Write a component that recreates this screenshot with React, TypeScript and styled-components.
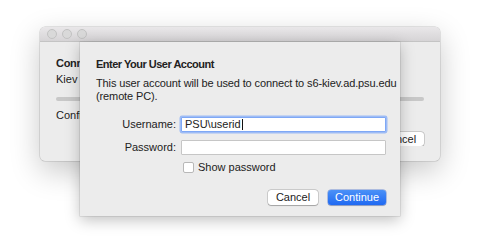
import React from "react";
import styled, { createGlobalStyle } from "styled-components";

const Global = createGlobalStyle`
  html, body { margin: 0; padding: 0; background: #ffffff; }
  body { font-family: "Liberation Sans", Arial, sans-serif; -webkit-font-smoothing: antialiased; }
`;

const Page = styled.div`
  width: 480px;
  height: 236px;
  padding: 27px 0 0 40px;
  box-sizing: border-box;
  position: relative;
  overflow: hidden;
`;

const Window = styled.div`
  width: 400px;
  height: 134px;
  background: #ececec;
  border-radius: 5px;
  box-shadow: 0 10px 30px rgba(0, 0, 0, 0.22), 0 0 0 0.5px rgba(0, 0, 0, 0.18);
  display: flex;
  flex-direction: column;
  position: relative;
`;

const TitleBar = styled.div`
  height: 14px;
  background: linear-gradient(#e9e7e9, #d6d4d6);
  border-bottom: 1px solid #c4c4c4;
  border-radius: 5px 5px 0 0;
  display: flex;
  align-items: center;
  gap: 5px;
  padding-left: 7px;
`;

const Light = styled.span`
  width: 8px;
  height: 8px;
  border-radius: 50%;
  background: #d9d9d9;
  border: 0.5px solid #c2c2c2;
`;

const WinBody = styled.div`
  display: flex;
  font-size: 11px;
  color: #222;
`;

const LeftCol = styled.div`
  width: 40px;
  padding: 15px 0 0 16px;
  box-sizing: border-box;
  overflow: hidden;
  white-space: nowrap;
  display: flex;
  flex-direction: column;
`;

const Hidden = styled.div`
  width: 320px;
`;

const RightCol = styled.div`
  width: 40px;
  padding-right: 16px;
  padding-top: 55px;
  box-sizing: border-box;
  overflow: hidden;
  display: flex;
  flex-direction: column;
`;

const Bold = styled.div`
  font-weight: 700;
  line-height: 13px;
  letter-spacing: -0.3px;
`;

const Line = styled.div`
  line-height: 13px;
  margin-top: 3px;
`;

const Track = styled.div<{ $right?: boolean }>`
  height: 4px;
  background: #c8c8c8;
  border-radius: ${(p) => (p.$right ? "0 2px 2px 0" : "2px 0 0 2px")};
  margin-top: ${(p) => (p.$right ? "0" : "11px")};
`;

const Line2 = styled.div`
  line-height: 13px;
  margin-top: 8px;
`;

const BgButton = styled.div`
  width: 50px;
  height: 14px;
  margin-top: 31px;
  margin-left: -26px;
  border-radius: 3px;
  background: #fff;
  box-shadow: 0 0 0 0.5px rgba(0, 0, 0, 0.25), 0 0.5px 1px rgba(0, 0, 0, 0.2);
  font-size: 11px;
  line-height: 14px;
  text-align: center;
  color: #222;
  flex-shrink: 0;
`;

const Sheet = styled.div`
  position: absolute;
  left: 80px;
  top: 42px;
  width: 320px;
  height: 174px;
  background: #ececec;
  box-shadow: 0 4px 14px rgba(0, 0, 0, 0.25), 0 0 0 0.5px rgba(0, 0, 0, 0.15);
  box-sizing: border-box;
  padding: 16px 14px 0 16px;
  display: flex;
  flex-direction: column;
  font-size: 11px;
  color: #222;
`;

const Title = styled.div`
  font-weight: 700;
  line-height: 13px;
  letter-spacing: -0.5px;
`;

const Desc = styled.div`
  margin-top: 6px;
  line-height: 13px;
  white-space: nowrap;
  letter-spacing: -0.12px;
`;

const Form = styled.div`
  display: grid;
  grid-template-columns: 81px 205px;
  column-gap: 5px;
  row-gap: 8px;
  align-items: center;
  margin-top: 14px;
  margin-left: -1px;
`;

const Label = styled.div`
  text-align: right;
  line-height: 15px;
`;

const Field = styled.div<{ $focus?: boolean }>`
  height: 15px;
  background: #fff;
  box-sizing: border-box;
  border: 1px solid ${(p) => (p.$focus ? "#7fa8f5" : "#c6c6c6")};
  box-shadow: ${(p) => (p.$focus ? "0 0 0 1.5px #9ebcf5" : "none")};
  border-radius: 1px;
  padding-left: 3px;
  line-height: 13px;
  font-size: 11px;
  display: flex;
  align-items: center;
`;

const Caret = styled.span`
  display: inline-block;
  width: 1px;
  height: 11px;
  background: #111;
  margin-left: 1px;
`;

const CheckRow = styled.label`
  grid-column: 2;
  display: flex;
  align-items: center;
  gap: 4px;
  margin-top: -2px;
  padding-left: 2px;
`;

const Box = styled.span`
  width: 9px;
  height: 9px;
  background: #fff;
  border: 1px solid #b8b8b8;
  border-radius: 2px;
`;

const Buttons = styled.div`
  display: flex;
  justify-content: flex-end;
  gap: 10px;
  margin-top: 17px;
`;

const Button = styled.div<{ $primary?: boolean }>`
  width: ${(p) => (p.$primary ? "58px" : "50px")};
  height: 15px;
  border-radius: 3px;
  font-size: 11px;
  line-height: 15px;
  text-align: center;
  color: ${(p) => (p.$primary ? "#fff" : "#222")};
  background: ${(p) => (p.$primary ? "linear-gradient(#4b91f7, #1f69f2)" : "#fff")};
  box-shadow: ${(p) =>
    p.$primary
      ? "0 0 0 0.5px rgba(0, 60, 200, 0.5), 0 0.5px 1px rgba(0,0,0,0.2)"
      : "0 0 0 0.5px rgba(0, 0, 0, 0.25), 0 0.5px 1px rgba(0, 0, 0, 0.2)"};
`;

export default function App() {
  return (
    <Page>
      <Global />
      <Window>
        <TitleBar>
          <Light />
          <Light />
          <Light />
        </TitleBar>
        <WinBody>
          <LeftCol>
            <Bold>Conn</Bold>
            <Line>Kiev</Line>
            <Track />
            <Line2>Confi</Line2>
          </LeftCol>
          <Hidden />
          <RightCol>
            <Track $right />
            <BgButton>Cancel</BgButton>
          </RightCol>
        </WinBody>
      </Window>
      <Sheet>
        <Title>Enter Your User Account</Title>
        <Desc>
          This user account will be used to connect to s6-kiev.ad.psu.edu
          <br />
          (remote PC).
        </Desc>
        <Form>
          <Label>Username:</Label>
          <Field $focus>
            PSU\userid
            <Caret />
          </Field>
          <Label>Password:</Label>
          <Field />
          <CheckRow>
            <Box />
            Show password
          </CheckRow>
        </Form>
        <Buttons>
          <Button>Cancel</Button>
          <Button $primary>Continue</Button>
        </Buttons>
      </Sheet>
    </Page>
  );
}
